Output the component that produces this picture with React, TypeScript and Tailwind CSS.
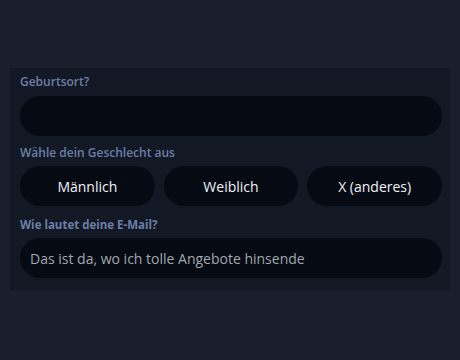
import { useState } from "react";

const genders = ["Männlich", "Weiblich", "X (anderes)"];

const labelClass = "block text-[12px] font-semibold leading-[18px] text-[#6b7fa6]";

export default function App() {
  const [place, setPlace] = useState("");
  const [email, setEmail] = useState("");
  const [gender, setGender] = useState<string | null>(null);

  return (
    <div
      className="min-h-[360px] w-full bg-[#1a1f2d] pt-[68px] pb-[70px] px-2.5"
      style={{ fontFamily: '"Open Sans", "Noto Sans", sans-serif' }}
    >
      <form className="flex flex-col bg-[#131825] pl-2.5 pr-2 pt-[5px] pb-3">
        <label className={labelClass}>Geburtsort?</label>
        <input
          value={place}
          onChange={(e) => setPlace(e.target.value)}
          className="mt-[5px] h-10 w-full rounded-full bg-[#060a13] px-2.5 text-[14px] text-gray-200 outline-none"
        />
        <label className={`${labelClass} mt-2`}>Wähle dein Geschlecht aus</label>
        <div className="mt-1 grid grid-cols-3 gap-[9px]">
          {genders.map((g) => (
            <button
              key={g}
              type="button"
              onClick={() => setGender(g)}
              className={
                "h-10 rounded-full text-[14px] text-[#f1f3f6] " +
                (gender === g ? "bg-[#1e2a44]" : "bg-[#060a13]")
              }
            >
              {g}
            </button>
          ))}
        </div>
        <label className="mt-2.5 block text-[11.5px] font-bold leading-[18px] text-[#6b7fa6]">
          Wie lautet deine E-Mail?
        </label>
        <input
          type="email"
          value={email}
          onChange={(e) => setEmail(e.target.value)}
          placeholder="Das ist da, wo ich tolle Angebote hinsende"
          className="mt-1 h-10 w-full rounded-full bg-[#060a13] px-2.5 text-[14px] text-gray-200 outline-none placeholder:text-[#a3a7ae]"
        />
      </form>
    </div>
  );
}
